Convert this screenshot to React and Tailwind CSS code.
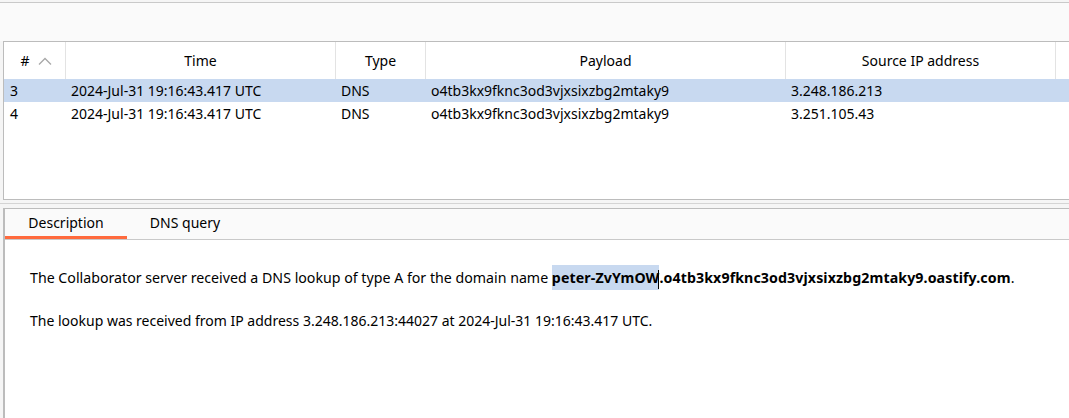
import React from "react";

const font = { fontFamily: '"Noto Sans", "Open Sans", sans-serif' };

const rows = [
  { n: "3", time: "2024-Jul-31 19:16:43.417 UTC", type: "DNS", payload: "o4tb3kx9fknc3od3vjxsixzbg2mtaky9", ip: "3.248.186.213", sel: true },
  { n: "4", time: "2024-Jul-31 19:16:43.417 UTC", type: "DNS", payload: "o4tb3kx9fknc3od3vjxsixzbg2mtaky9", ip: "3.251.105.43", sel: false },
];

export default function App() {
  return (
    <div className="w-[1069px] h-[418px] overflow-hidden bg-[#f5f5f5] text-[14px] text-black" style={font}>
      <div className="h-[2px]" />
      <div className="h-[39px] border-t border-[#c9c9c9] bg-[#fafafa]" />
      {/* table */}
      <div className="ml-[3px] h-[159px] border-t border-l border-b border-[#bcbcbc] bg-white">
        <div className="grid grid-cols-[62px_270px_90px_360px_270px_1fr] h-[37px]">
          <div className="flex items-center justify-center gap-[8px] border-r border-[#e3e3e3] pl-[3px]">
            <span>#</span>
            <svg width="14" height="8" viewBox="0 0 14 8" className="mt-[1px]">
              <polyline points="1,7.5 7,1.5 13,7.5" fill="none" stroke="#a8a8a8" strokeWidth="1.3" />
            </svg>
          </div>
          <div className="flex items-center justify-center border-r border-[#e3e3e3]">Time</div>
          <div className="flex items-center justify-center border-r border-[#e3e3e3]">Type</div>
          <div className="flex items-center justify-center border-r border-[#e3e3e3]">Payload</div>
          <div className="flex items-center justify-center border-r border-[#e3e3e3]">Source IP address</div>
          <div />
        </div>
        {rows.map((r) => (
          <div
            key={r.n}
            className={`grid grid-cols-[62px_270px_90px_360px_270px_1fr] h-[23px] items-center ${r.sel ? "bg-[#c8d9f0]" : ""}`}
          >
            <div className="pl-[6px]">{r.n}</div>
            <div className="pl-[5px]">{r.time}</div>
            <div className="pl-[5px]">{r.type}</div>
            <div className="pl-[5px]">{r.payload}</div>
            <div className="pl-[5px]">{r.ip}</div>
            <div />
          </div>
        ))}
      </div>
      <div className="h-[3px]" />
      <div className="h-[2px] border-t border-[#d4d4d4]" />
      <div className="h-[3px]" />
      {/* tabs panel */}
      <div className="ml-[3px] border-t border-l-2 border-[#bcbcbc] bg-white h-[300px]">
        <div className="flex h-[31px] bg-[#fafafa] border-b border-[#c9c9c9]">
          <div className="relative w-[122px] flex items-center justify-center pb-[4px]">
            <span>Description</span>
            <div className="absolute left-0 right-0 bottom-0 h-[3px] bg-[#ff6a3d]" />
          </div>
          <div className="w-[116px] flex items-center justify-center pb-[4px]">DNS query</div>
        </div>
        <div className="pl-[25px] pt-[26px]">
          <p className="h-[23px] leading-[23px] whitespace-nowrap text-[14.2px]">
            The Collaborator server received a DNS lookup of type A for the domain name{" "}
            <span className="font-bold tracking-[0.1px]">
              <span className="bg-[#c8d9f0] py-[3px]">peter-ZvYmOW</span>
              <span className="inline-block w-[1px] h-[19px] bg-black align-middle -ml-[1px]" />
              .o4tb3kx9fknc3od3vjxsixzbg2mtaky9.oastify.com
            </span>
            .
          </p>
          <div className="h-[20px]" />
          <p className="h-[23px] leading-[23px] whitespace-nowrap">
            The lookup was received from IP address 3.248.186.213:44027 at 2024-Jul-31 19:16:43.417 UTC.
          </p>
        </div>
      </div>
    </div>
  );
}
